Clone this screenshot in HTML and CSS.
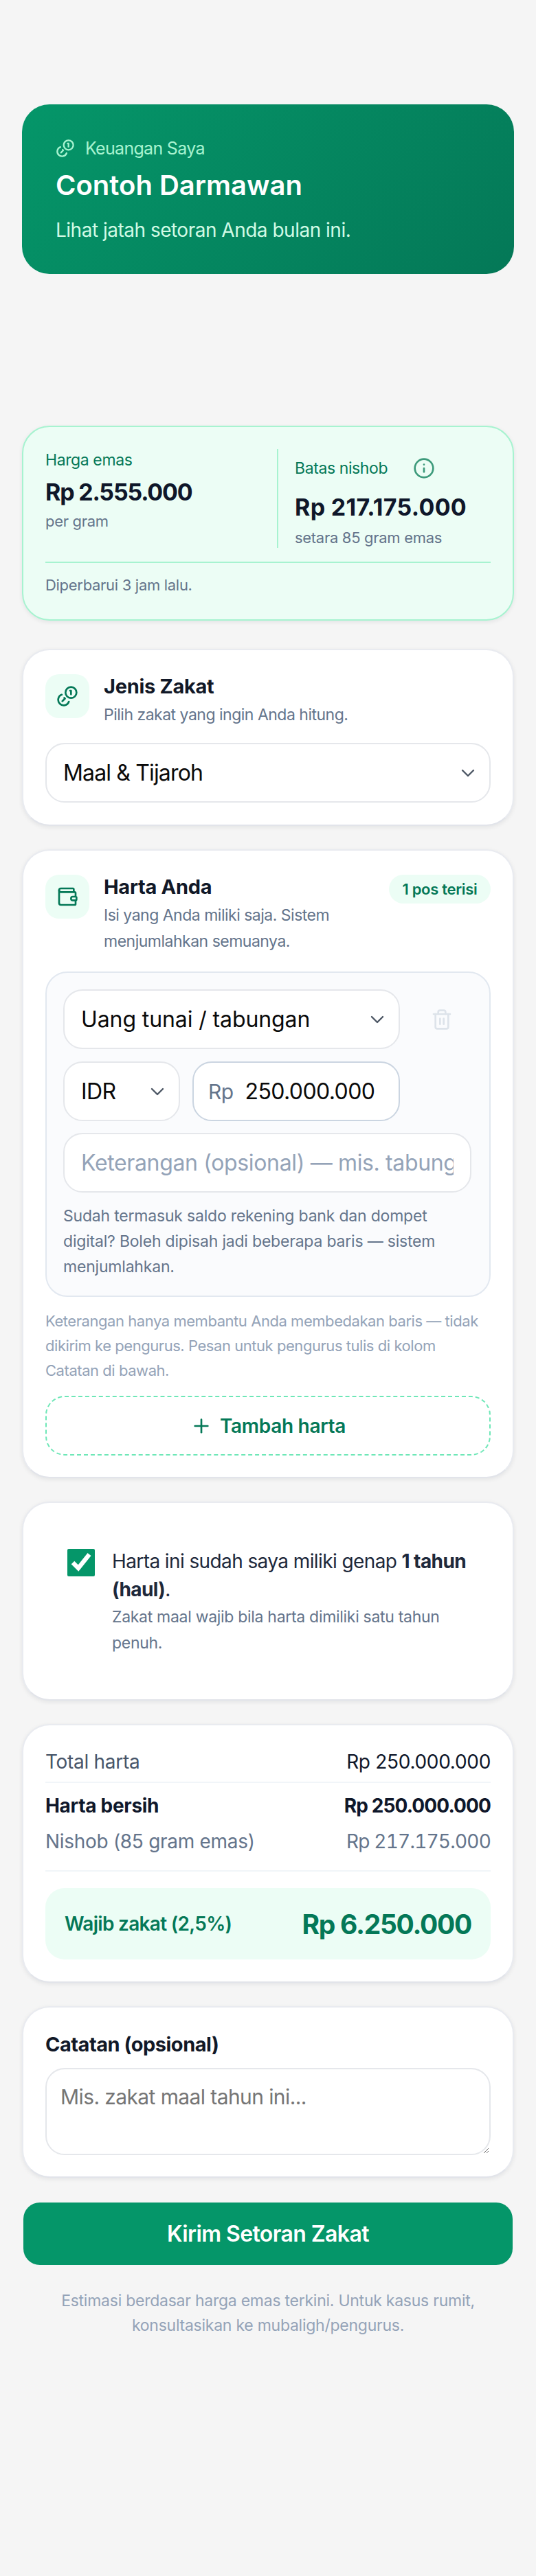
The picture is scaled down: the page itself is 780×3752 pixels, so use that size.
FILE: index.html
```html
<!DOCTYPE html>
<html lang="id">
<head>
<meta charset="utf-8">
<title>Setoran Zakat</title>
<link rel="stylesheet" href="styles.css">
</head>
<body>
<main class="page">
  <section class="hero">
    <p class="hero-kicker"><svg class="ico-coins" viewBox="0 0 24 24"><circle cx="16" cy="8" r="6"/><path d="M5.91 10.37A6 6 0 1 0 13.66 18"/><path d="M15 6h1v4"/><path d="m8.71 13.88.7.71-2.82 2.82"/></svg>Keuangan Saya</p>
    <h1>Contoh Darmawan</h1>
    <p class="hero-sub">Lihat jatah setoran Anda bulan ini.</p>
  </section>

  <section class="card gold">
    <div class="gold-cols">
      <div class="gold-left">
        <p class="gold-label">Harga emas</p>
        <p class="gold-value">Rp 2.555.000</p>
        <p class="gold-note">per gram</p>
      </div>
      <div class="gold-right">
        <p class="gold-label gold-label-row">Batas nishob <svg class="ico-info" viewBox="0 0 24 24"><circle cx="12" cy="12" r="10"/><path d="M12 16v-4"/><path d="M12 8h.01"/></svg></p>
        <p class="gold-value">Rp 217.175.000</p>
        <p class="gold-note">setara 85 gram emas</p>
      </div>
    </div>
    <p class="gold-updated">Diperbarui 3 jam lalu.</p>
  </section>

  <section class="card form-card">
    <div class="head">
      <span class="head-icon"><svg viewBox="0 0 24 24"><circle cx="16" cy="8" r="6"/><path d="M5.91 10.37A6 6 0 1 0 13.66 18"/><path d="M15 6h1v4"/><path d="m8.71 13.88.7.71-2.82 2.82"/></svg></span>
      <div class="head-text">
        <h2>Jenis Zakat</h2>
        <p>Pilih zakat yang ingin Anda hitung.</p>
      </div>
    </div>
    <div class="control select-full">Maal &amp; Tijaroh<svg class="chev" viewBox="0 0 24 24"><path d="m6 9 6 6 6-6"/></svg></div>
  </section>

  <section class="card form-card">
    <div class="head">
      <span class="head-icon"><svg viewBox="0 0 24 24"><path d="M19 7V4a1 1 0 0 0-1-1H5a2 2 0 0 0 0 4h15a1 1 0 0 1 1 1v4h-3a2 2 0 0 0 0 4h3a1 1 0 0 0 1-1v-2a1 1 0 0 0-1-1"/><path d="M3 5v14a2 2 0 0 0 2 2h15a1 1 0 0 0 1-1v-4"/></svg></span>
      <div class="head-text grow">
        <h2>Harta Anda</h2>
        <p>Isi yang Anda miliki saja. Sistem menjumlahkan semuanya.</p>
      </div>
      <span class="badge">1 pos terisi</span>
    </div>
    <div class="panel">
      <div class="panel-grid">
        <div class="control span-two">Uang tunai / tabungan<svg class="chev" viewBox="0 0 24 24"><path d="m6 9 6 6 6-6"/></svg></div>
        <span class="trash"><svg viewBox="0 0 24 24"><path d="M3 6h18"/><path d="M19 6v14a2 2 0 0 1-2 2H7a2 2 0 0 1-2-2V6"/><path d="M8 6V4a2 2 0 0 1 2-2h4a2 2 0 0 1 2 2v2"/><path d="M10 11v6"/><path d="M14 11v6"/></svg></span>
        <div class="control">IDR<svg class="chev" viewBox="0 0 24 24"><path d="m6 9 6 6 6-6"/></svg></div>
        <div class="control amount"><span class="rp">Rp</span>250.000.000</div>
      </div>
      <div class="control note-input"><span>Keterangan (opsional) — mis. tabungan</span></div>
      <p class="help">Sudah termasuk saldo rekening bank dan dompet digital? Boleh dipisah jadi beberapa baris — sistem menjumlahkan.</p>
    </div>
    <p class="hint">Keterangan hanya membantu Anda membedakan baris — tidak dikirim ke pengurus. Pesan untuk pengurus tulis di kolom Catatan di bawah.</p>
    <button class="add" type="button"><svg viewBox="0 0 24 24"><path d="M5 12h14"/><path d="M12 5v14"/></svg>Tambah harta</button>
  </section>

  <section class="card haul">
    <input class="check" type="checkbox" checked>
    <div class="haul-text">
      <p class="haul-main">Harta ini sudah saya miliki genap <b>1 tahun (haul)</b>.</p>
      <p class="haul-sub">Zakat maal wajib bila harta dimiliki satu tahun penuh.</p>
    </div>
  </section>

  <section class="card summary">
    <div class="row row-total"><span>Total harta</span><span class="val">Rp 250.000.000</span></div>
    <div class="row row-net"><span>Harta bersih</span><span class="net-val">Rp 250.000.000</span></div>
    <div class="row row-nishob"><span>Nishob (85 gram emas)</span><span class="nishob-val">Rp 217.175.000</span></div>
    <div class="due"><span class="due-label">Wajib zakat (2,5%)</span><span class="due-value">Rp 6.250.000</span></div>
  </section>

  <section class="card notes">
    <label class="notes-label" for="catatan">Catatan (opsional)</label>
    <textarea id="catatan" class="notes-area" placeholder="Mis. zakat maal tahun ini..."></textarea>
  </section>

  <button class="submit" type="button">Kirim Setoran Zakat</button>
  <p class="foot">Estimasi berdasar harga emas terkini. Untuk kasus rumit, konsultasikan ke mubaligh/pengurus.</p>
</main>
</body>
</html>
```

FILE: styles.css
```css
* { box-sizing: border-box; }
html, body { margin: 0; padding: 0; }
body {
  background: #f5f5f5;
  color: #0f172a;
  font-family: Inter, "Noto Sans", sans-serif;
  letter-spacing: -0.3px;
}
p, h1, h2 { margin: 0; }
svg { fill: none; stroke: currentColor; stroke-width: 2; stroke-linecap: round; stroke-linejoin: round; flex: none; }

.page { padding: 152px 32px 0; min-height: 3752px; }

.hero {
  height: 247px;
  border-radius: 40px;
  padding: 44px 48px 0 49px;
  background: linear-gradient(135deg, #059669, #047857);
  color: #fff;
  margin-bottom: 221px;
}
.hero-kicker { display: flex; align-items: center; gap: 15px; font-size: 25px; line-height: 40px; letter-spacing: -0.7px; color: #a7f3d0; }
.ico-coins { width: 28px; height: 28px; }
h1 { font-size: 40px; font-weight: 600; line-height: 56px; margin-top: 6px; letter-spacing: 0; }
.hero-sub { font-size: 28px; line-height: 44px; margin-top: 15px; letter-spacing: -0.5px; color: #d1fae5; }

.card {
  background: #fff;
  border: 2px solid #e9ebf0;
  border-bottom-color: #e2e4ea;
  border-radius: 40px;
  padding: 35px 32px 32px;
  margin-bottom: 34px;
  box-shadow: 0 2px 6px rgba(15, 23, 42, 0.08);
}

.gold { background: #ecfdf5; border-color: #a7f3d0; padding: 32px 32px 0; height: 284px; margin-bottom: 41px; }
.gold-cols { display: grid; grid-template-columns: 337px 1fr; height: 164px; }
.gold-right { border-left: 2px solid #a7f3d0; padding-left: 24px; height: 144px; }
.gold-label { font-size: 23px; line-height: 32px; letter-spacing: -0.4px; color: #047857; }
.gold-label-row { display: flex; align-items: center; gap: 37px; height: 56px; }
.ico-info { width: 32px; height: 32px; stroke: #3d9a7b; }
.gold-value { font-size: 34px; font-weight: 700; line-height: 48px; margin-top: 7px; letter-spacing: -1.2px; }
.gold-right .gold-value { margin-top: 5px; letter-spacing: 0.3px; }
.gold-note { font-size: 22px; line-height: 32px; letter-spacing: -0.3px; color: #64748b; margin-top: 2px; }
.gold-right .gold-note { margin-top: 4px; }
.gold-updated { border-top: 2px solid #a7f3d0; font-size: 22px; line-height: 32px; letter-spacing: -0.3px; padding-top: 16px; color: #64748b; }

.head { display: flex; align-items: flex-start; gap: 21px; }
.head-icon {
  width: 64px; height: 64px; border-radius: 20px; background: #ecfdf5; color: #047857;
  display: flex; align-items: center; justify-content: center; flex: none;
}
.head-icon svg { width: 32px; height: 32px; }
.head-text h2 { font-size: 29px; font-weight: 700; line-height: 36px; letter-spacing: -0.3px; color: #111827; }
.head-text p { font-size: 23px; line-height: 38px; letter-spacing: -0.5px; color: #64748b; margin-top: 4px; }
.grow { flex: 1; min-width: 0; }
.badge {
  flex: none; width: 148px; height: 42px; border-radius: 21px; background: #ecfdf5;
  color: #047857; font-size: 22px; font-weight: 600; line-height: 42px; text-align: center;
}

.control {
  display: flex; align-items: center; justify-content: space-between;
  height: 87px; padding: 0 24px; background: #fff;
  border: 2px solid #e5e7eb; border-radius: 28px;
  font-size: 32px; letter-spacing: -0.6px; color: #0a0a0a;
}
.chev { width: 32px; height: 32px; color: #4b5563; stroke-width: 1.8; margin-right: -9px; }
.select-full { margin-top: 22px; letter-spacing: -0.85px; }

.panel { margin-top: 25px; background: #fafbfd; border: 2px solid #e2e8f0; border-radius: 32px; padding: 24px 24px 0; height: 474px; }
.panel-grid { display: grid; grid-template-columns: 170px 302px 86px; column-gap: 18px; row-gap: 18px; }
.span-two { grid-column: span 2; letter-spacing: -0.1px; }
.trash { display: flex; align-items: center; justify-content: center; color: #dde3ea; }
.trash svg { width: 32px; height: 32px; }
.amount { justify-content: flex-start; border-color: #cbd5e1; padding-left: 21px; }
.rp { color: #64748b; font-size: 30px; margin-right: 17px; }
.note-input { margin-top: 17px; width: 594px; color: #94a3b8; letter-spacing: -0.35px; }
.note-input span { display: block; overflow: hidden; white-space: nowrap; }
.help { margin-top: 16px; font-size: 23px; line-height: 37px; letter-spacing: -0.2px; color: #64748b; }
.hint { margin-top: 17px; font-size: 22px; line-height: 36px; letter-spacing: -0.45px; color: #94a3b8; }
.add {
  display: flex; align-items: center; justify-content: center; gap: 11px;
  width: 100%; height: 87px; margin-top: 19px; background: #fff;
  border: 2px dashed #6ee7b7; border-radius: 28px; color: #047857;
  font: inherit; font-size: 28px; font-weight: 600; letter-spacing: inherit;
}
.add svg { width: 32px; height: 32px; }
.form-card:has(.add) { padding-bottom: 31px; }

.haul { display: flex; gap: 25px; padding: 67px 48px 0 64px; height: 290px; }
.check { width: 40px; height: 40px; margin: 0; accent-color: #059669; flex: none; }
.haul-main { font-size: 28px; line-height: 41px; letter-spacing: -0.6px; color: #1e293b; margin-top: -2px; }
.haul-main b { font-weight: 700; }
.haul-sub { font-size: 23px; line-height: 38px; letter-spacing: -0.3px; color: #64748b; }

.summary { padding: 29px 32px 0; height: 377px; }
.row { display: flex; justify-content: space-between; font-size: 28px; }
.row-total { color: #475569; line-height: 48px; padding-bottom: 5px; border-bottom: 2px solid #f1f5f9; }
.val { color: #0f172a; }
.row-net { font-weight: 700; color: #0f172a; line-height: 44px; margin-top: 11px; }
.net-val { letter-spacing: -0.9px; }
.row-nishob { color: #64748b; line-height: 44px; margin-top: 8px; padding-bottom: 20px; border-bottom: 2px solid #f1f5f9; }
.nishob-val { font-variant-numeric: tabular-nums; letter-spacing: -0.8px; }
.due {
  display: flex; justify-content: space-between; align-items: center;
  height: 104px; margin-top: 24px; padding: 0 28px;
  background: #ecfdf5; border-radius: 28px; color: #047857;
}
.due-label { font-size: 28px; font-weight: 600; letter-spacing: -0.7px; }
.due-value { font-size: 39px; font-weight: 700; letter-spacing: -1.3px; }

.notes { padding: 35px 32px 0; height: 250px; margin-bottom: 36px; }
.notes-label { display: block; font-size: 29px; font-weight: 700; line-height: 38px; letter-spacing: -0.5px; color: #111827; }
.notes-area {
  display: block; width: 100%; height: 127px; margin-top: 15px;
  padding: 22px 20px; border: 2px solid #e5e7eb; border-radius: 28px;
  font-family: inherit; font-size: 30px; letter-spacing: -0.6px; background: #fff;
}
.notes-area::placeholder { color: #757575; opacity: 1; }

.submit {
  display: block; width: 712px; height: 91px; margin: 0 2px;
  background: #059669; color: #fff; border: 0; border-radius: 24px;
  font: inherit; font-size: 32px; font-weight: 600; letter-spacing: -0.6px;
}
.foot { margin: 34px 20px 0; font-size: 23px; line-height: 36px; letter-spacing: -0.25px; text-align: center; color: #94a3b8; }
```
